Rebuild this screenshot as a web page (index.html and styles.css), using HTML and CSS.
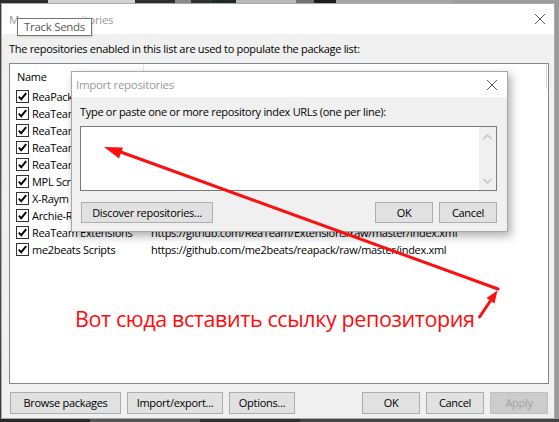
FILE: index.html
```html
<!DOCTYPE html>
<html>
<head>
<meta charset="utf-8">
<link rel="stylesheet" href="styles.css">
</head>
<body>
<div class="desktop">
  <div class="window">
    <div class="titlebar">
      <span class="title">Manage repositories</span>
      <svg class="close" width="12" height="12" viewBox="0 0 12 12"><path d="M1 1 L11 11 M11 1 L1 11" stroke="#5a5a5a" stroke-width="1" fill="none"/></svg>
    </div>
    <div class="content">
      <p class="intro">The repositories enabled in this list are used to populate the package list:</p>
      <div class="list">
        <div class="list-head">
          <div class="col-name">Name</div>
          <div class="col-url"></div>
        </div>
        <div class="row"><span class="check"><svg width="13" height="13" viewBox="0 0 13 13"><rect x="0.5" y="0.5" width="12" height="12" fill="#fff" stroke="#333"/><path d="M2.8 6.6 L5.2 9.2 L10.2 3.2" stroke="#000" stroke-width="1.9" fill="none"/></svg></span><span class="name">ReaPack</span><span class="url">https://github.com/cfillion/reapack/raw/master/index.xml</span></div>
        <div class="row"><span class="check"><svg width="13" height="13" viewBox="0 0 13 13"><rect x="0.5" y="0.5" width="12" height="12" fill="#fff" stroke="#333"/><path d="M2.8 6.6 L5.2 9.2 L10.2 3.2" stroke="#000" stroke-width="1.9" fill="none"/></svg></span><span class="name">ReaTeam JSFX</span><span class="url">https://github.com/ReaTeam/JSFX/raw/master/index.xml</span></div>
        <div class="row"><span class="check"><svg width="13" height="13" viewBox="0 0 13 13"><rect x="0.5" y="0.5" width="12" height="12" fill="#fff" stroke="#333"/><path d="M2.8 6.6 L5.2 9.2 L10.2 3.2" stroke="#000" stroke-width="1.9" fill="none"/></svg></span><span class="name">ReaTeam Scripts</span><span class="url">https://github.com/ReaTeam/ReaScripts/raw/master/index.xml</span></div>
        <div class="row"><span class="check"><svg width="13" height="13" viewBox="0 0 13 13"><rect x="0.5" y="0.5" width="12" height="12" fill="#fff" stroke="#333"/><path d="M2.8 6.6 L5.2 9.2 L10.2 3.2" stroke="#000" stroke-width="1.9" fill="none"/></svg></span><span class="name">ReaTeam Themes</span><span class="url">https://github.com/ReaTeam/Themes/raw/master/index.xml</span></div>
        <div class="row"><span class="check"><svg width="13" height="13" viewBox="0 0 13 13"><rect x="0.5" y="0.5" width="12" height="12" fill="#fff" stroke="#333"/><path d="M2.8 6.6 L5.2 9.2 L10.2 3.2" stroke="#000" stroke-width="1.9" fill="none"/></svg></span><span class="name">ReaTeam LangPacks</span><span class="url">https://github.com/ReaTeam/LangPacks/raw/master/index.xml</span></div>
        <div class="row"><span class="check"><svg width="13" height="13" viewBox="0 0 13 13"><rect x="0.5" y="0.5" width="12" height="12" fill="#fff" stroke="#333"/><path d="M2.8 6.6 L5.2 9.2 L10.2 3.2" stroke="#000" stroke-width="1.9" fill="none"/></svg></span><span class="name">MPL Scripts</span><span class="url">https://github.com/MichaelPilyavskiy/ReaScripts/raw/master/index.xml</span></div>
        <div class="row"><span class="check"><svg width="13" height="13" viewBox="0 0 13 13"><rect x="0.5" y="0.5" width="12" height="12" fill="#fff" stroke="#333"/><path d="M2.8 6.6 L5.2 9.2 L10.2 3.2" stroke="#000" stroke-width="1.9" fill="none"/></svg></span><span class="name">X-Raym Scripts</span><span class="url">https://github.com/X-Raym/REAPER-ReaScripts/raw/master/index.xml</span></div>
        <div class="row"><span class="check"><svg width="13" height="13" viewBox="0 0 13 13"><rect x="0.5" y="0.5" width="12" height="12" fill="#fff" stroke="#333"/><path d="M2.8 6.6 L5.2 9.2 L10.2 3.2" stroke="#000" stroke-width="1.9" fill="none"/></svg></span><span class="name">Archie-ReaScripts</span><span class="url">https://github.com/ArchieScript/Archie_ReaScripts/raw/master/index.xml</span></div>
        <div class="row"><span class="check"><svg width="13" height="13" viewBox="0 0 13 13"><rect x="0.5" y="0.5" width="12" height="12" fill="#fff" stroke="#333"/><path d="M2.8 6.6 L5.2 9.2 L10.2 3.2" stroke="#000" stroke-width="1.9" fill="none"/></svg></span><span class="name">ReaTeam Extensions</span><span class="url">https://github.com/ReaTeam/Extensions/raw/master/index.xml</span></div>
        <div class="row"><span class="check"><svg width="13" height="13" viewBox="0 0 13 13"><rect x="0.5" y="0.5" width="12" height="12" fill="#fff" stroke="#333"/><path d="M2.8 6.6 L5.2 9.2 L10.2 3.2" stroke="#000" stroke-width="1.9" fill="none"/></svg></span><span class="name">me2beats Scripts</span><span class="url">https://github.com/me2beats/reapack/raw/master/index.xml</span></div>
        <div class="scroll-hint"></div>
      </div>
      <div class="footer">
        <div class="btn-group">
          <button class="btn w-browse">Browse packages</button>
          <button class="btn w-import">Import/export...</button>
          <button class="btn w-options">Options...</button>
        </div>
        <div class="btn-group">
          <button class="btn w-small">OK</button>
          <button class="btn w-small">Cancel</button>
          <button class="btn w-small disabled">Apply</button>
        </div>
      </div>
    </div>
  </div>

  <div class="tooltip">Track Sends</div>

  <div class="dialog">
    <div class="dlg-title">
      <span class="dlg-title-text">Import repositories</span>
      <svg class="close" width="12" height="12" viewBox="0 0 12 12"><path d="M1 1 L11 11 M11 1 L1 11" stroke="#5a5a5a" stroke-width="1" fill="none"/></svg>
    </div>
    <div class="dlg-body">
      <p class="dlg-label">Type or paste one or more repository index URLs (one per line):</p>
      <div class="textbox">
        <div class="tb-area"></div>
        <div class="tb-scroll">
          <svg width="17" height="12" viewBox="0 0 17 12"><path d="M4.5 8 L8.5 4 L12.5 8" stroke="#c2c2c2" stroke-width="1.3" fill="none"/></svg>
          <svg width="17" height="12" viewBox="0 0 17 12"><path d="M4.5 4 L8.5 8 L12.5 4" stroke="#c2c2c2" stroke-width="1.3" fill="none"/></svg>
        </div>
      </div>
      <div class="dlg-buttons">
        <button class="btn w-discover">Discover repositories...</button>
        <div class="btn-group">
          <button class="btn w-dlg">OK</button>
          <button class="btn w-dlg">Cancel</button>
        </div>
      </div>
    </div>
  </div>

  <svg class="annot" width="559" height="422" viewBox="0 0 559 422">
    <line x1="498" y1="289" x2="118" y2="151" stroke="#fa1010" stroke-width="3" stroke-linecap="round"/>
    <polygon points="104,147 123,147.6 119,158.6" fill="#fa1010"/>
    <line x1="479.5" y1="317" x2="491" y2="300" stroke="#fa1010" stroke-width="3" stroke-linecap="round"/>
    <polygon points="497.5,290.5 494.5,303.5 486.5,298" fill="#fa1010"/>
  </svg>
  <div class="annot-text">Вот сюда вставить ссылку репозитория</div>
</div>
</body>
</html>
```

FILE: styles.css
```css
* { box-sizing: border-box; }
html, body { margin: 0; padding: 0; }
body {
  width: 559px;
  height: 422px;
  overflow: hidden;
  font-family: "Open Sans", "Noto Sans", sans-serif;
  font-size: 11px;
  letter-spacing: -0.3px;
  color: #000;
}
.desktop {
  position: relative;
  width: 559px;
  height: 422px;
  padding: 3px 4px 3px 1px;
  background:
    linear-gradient(to right, #2c2c2c 0, #2c2c2c 48px, #cfd0cf 48px, #cfd0cf 135px, #2e2e2e 135px, #2e2e2e 175px, #8a8a8a 175px, #8a8a8a 191px, #303030 191px, #303030 212px, #1e2a2a 212px, #1e2a2a 236px, #b8b8b8 236px, #b8b8b8 296px, #6e7472 296px, #6e7472 314px, #1c1c1c 314px, #1c1c1c 336px, #a4a6a4 336px, #a4a6a4 453px, #9c9c9c 453px) top / 100% 3px no-repeat,
    linear-gradient(to right, #2a2a2a 0, #2a2a2a 90px, #555 90px, #555 200px, #303030 200px, #303030 300px, #444 300px) bottom / 100% 3px no-repeat,
    linear-gradient(#3c3c3c, #555 50%, #3a3a3a) left / 1px 100% no-repeat,
    #9a9a9a;
}
.window {
  width: 554px;
  height: 416px;
  border: 1px solid #aaaaaa;
  background: #f0f0f0;
  display: flex;
  flex-direction: column;
}
.titlebar {
  height: 30px;
  background: #fff;
  display: flex;
  align-items: center;
  justify-content: space-between;
  padding: 0 8px 0 7px;
  flex: none;
}
.title {
  color: #9a9a9a;
  font-size: 11.5px;
}
.content {
  flex: 1;
  display: flex;
  flex-direction: column;
  padding: 7px 5px 4px 7px;
  min-height: 0;
}
.intro {
  margin: 0;
  line-height: 16px;
  height: 16px;
  white-space: nowrap;
}
.list {
  margin-top: 6px;
  flex: 1;
  background: #fff;
  border: 1px solid #828790;
  position: relative;
  overflow: hidden;
}
.list-head {
  height: 24px;
  display: flex;
}
.col-name {
  width: 134px;
  padding-left: 7px;
  border-right: 1px solid #e5e5e5;
  height: 17px;
  line-height: 26px;
  overflow: visible;
}
.col-url { flex: 1; }
.row {
  height: 17px;
  display: flex;
  align-items: center;
  white-space: nowrap;
}
.check {
  width: 13px;
  height: 13px;
  margin-left: 6px;
  margin-right: 3px;
  display: flex;
}
.name {
  width: 113px;
  flex: none;
  overflow: hidden;
}
.url {
  padding-left: 6px;
}
.scroll-hint {
  position: absolute;
  right: 1px;
  top: 0;
  width: 1px;
  height: 25px;
  background: #dadada;
}
.footer {
  margin-top: 8px;
  height: 22px;
  display: flex;
  justify-content: space-between;
  padding-left: 1px;
  padding-right: 1px;
  flex: none;
}
.btn-group {
  display: flex;
  gap: 6px;
}
.btn {
  font-family: inherit;
  font-size: 11px;
  letter-spacing: -0.3px;
  height: 22px;
  background: #e1e1e1;
  border: 1px solid #adadad;
  color: #000;
  padding: 0;
  margin: 0;
  line-height: 18px;
}
.btn.disabled {
  background: #cccccc;
  border-color: #bfbfbf;
  color: #a0a0a0;
}
.w-browse { width: 111px; }
.w-import { width: 96px; }
.w-options { width: 66px; }
.w-small { width: 58px; }

.tooltip {
  position: absolute;
  left: 17px;
  top: 18px;
  width: 75px;
  height: 18px;
  background: #fff;
  border: 1px solid #767676;
  color: #575757;
  font-size: 11.5px;
  line-height: 16px;
  padding-left: 6px;
  white-space: nowrap;
  box-shadow: 1px 1px 2px rgba(0,0,0,0.15);
}

.dialog {
  position: absolute;
  left: 71px;
  top: 71px;
  width: 437px;
  height: 161px;
  border: 1px solid #a8a8a8;
  background: #f0f0f0;
  box-shadow: 3px 4px 9px rgba(0,0,0,0.32);
  display: flex;
  flex-direction: column;
}
.dlg-title {
  height: 25px;
  background: #fff;
  display: flex;
  align-items: center;
  justify-content: space-between;
  padding: 0 9px 0 4px;
  flex: none;
}
.dlg-title-text {
  color: #9a9a9a;
  font-size: 11.5px;
}
.dlg-body {
  flex: 1;
  padding: 7px 10px 8px 8px;
  display: flex;
  flex-direction: column;
}
.dlg-label {
  margin: 0;
  line-height: 16px;
  height: 16px;
  white-space: nowrap;
}
.textbox {
  margin-top: 6px;
  height: 65px;
  border: 1px solid #7a7a7a;
  background: #fff;
  display: flex;
}
.tb-area { flex: 1; }
.tb-scroll {
  width: 17px;
  background: #f0f0f0;
  display: flex;
  flex-direction: column;
  justify-content: space-between;
  padding: 4px 0 3px;
}
.tb-scroll svg { display: block; }
.dlg-buttons {
  margin-top: 11px;
  display: flex;
  justify-content: space-between;
  padding-left: 1px;
}
.dlg-buttons .btn { height: 21px; }
.w-discover { width: 132px; }
.w-dlg { width: 58px; }

.annot {
  position: absolute;
  left: 0;
  top: 0;
  pointer-events: none;
}
.annot-text {
  position: absolute;
  left: 75px;
  top: 303px;
  color: #ff0c0c;
  font-family: "Open Sans", sans-serif;
  font-size: 21.5px;
  letter-spacing: -0.4px;
  line-height: 32px;
  white-space: nowrap;
}
```
